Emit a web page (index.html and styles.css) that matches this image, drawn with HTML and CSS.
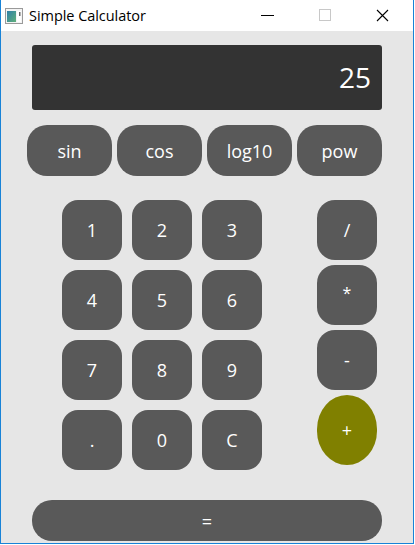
FILE: index.html
```html
<!DOCTYPE html>
<html>
<head>
<meta charset="utf-8">
<link rel="stylesheet" href="styles.css">
</head>
<body>
<div class="window">
  <div class="titlebar">
    <svg class="app-icon" width="18" height="16" viewBox="0 0 18 16">
      <defs>
        <linearGradient id="g" x1="0" y1="0" x2="1" y2="1">
          <stop offset="0" stop-color="#2f7fa8"/>
          <stop offset="1" stop-color="#5fb07a"/>
        </linearGradient>
      </defs>
      <rect x="0.5" y="0.5" width="17" height="15" fill="#f4f4f4" stroke="#9a9a9a"/>
      <rect x="2" y="3" width="9" height="11" fill="url(#g)"/>
      <rect x="12" y="3" width="4" height="11" fill="#ffffff"/>
      <rect x="14" y="4" width="1.5" height="4" fill="#6a6a6a"/>
    </svg>
    <span class="title">Simple Calculator</span>
    <div class="controls">
      <svg class="ctl" width="58" height="31" viewBox="0 0 58 31"><line x1="23" y1="15.5" x2="36" y2="15.5" stroke="#000" stroke-width="1"/></svg>
      <svg class="ctl" width="58" height="31" viewBox="0 0 58 31"><rect x="23.5" y="9.5" width="11" height="11" fill="none" stroke="#c8c8c8" stroke-width="1"/></svg>
      <svg class="ctl" width="58" height="31" viewBox="0 0 58 31"><path d="M23 10 L34 21 M34 10 L23 21" stroke="#000" stroke-width="1.1"/></svg>
    </div>
  </div>
  <div class="content">
    <div class="display">25</div>
    <div class="funcs">
      <button class="btn func">sin</button>
      <button class="btn func">cos</button>
      <button class="btn func">log10</button>
      <button class="btn func">pow</button>
    </div>
    <div class="keypad">
      <div class="numbers">
        <button class="btn key">1</button>
        <button class="btn key">2</button>
        <button class="btn key">3</button>
        <button class="btn key">4</button>
        <button class="btn key">5</button>
        <button class="btn key">6</button>
        <button class="btn key">7</button>
        <button class="btn key">8</button>
        <button class="btn key">9</button>
        <button class="btn key">.</button>
        <button class="btn key">0</button>
        <button class="btn key">C</button>
      </div>
      <div class="ops">
        <button class="btn op">/</button>
        <button class="btn op star">*</button>
        <button class="btn op">-</button>
        <button class="btn op plus">+</button>
      </div>
    </div>
    <button class="btn equals">=</button>
  </div>
</div>
</body>
</html>
```

FILE: styles.css
```css
* { box-sizing: border-box; }
html, body {
  margin: 0;
  padding: 0;
  background: #ffffff;
}
body {
  width: 415px;
  height: 545px;
  font-family: "Open Sans", "Noto Sans", sans-serif;
}
.window {
  width: 414px;
  height: 544px;
  border-left: 1px solid #1883d7;
  border-right: 1px solid #1883d7;
  border-bottom: 1px solid #1883d7;
  display: flex;
  flex-direction: column;
}
.titlebar {
  height: 31px;
  background: #ffffff;
  display: flex;
  align-items: center;
  flex: none;
}
.app-icon {
  margin-left: 4px;
  margin-top: 1px;
  flex: none;
}
.title {
  margin-left: 6px;
  font-size: 14.5px;
  color: #000;
  letter-spacing: -0.05px;
}
.controls {
  margin-left: auto;
  display: flex;
  margin-right: 1px;
}
.ctl { display: block; }
.content {
  flex: 1;
  background: #e6e6e6;
  display: flex;
  flex-direction: column;
  padding-top: 14px;
}
.display {
  margin-left: 31px;
  width: 350px;
  height: 65px;
  background: #333333;
  border-radius: 3px;
  color: #ffffff;
  font-size: 28px;
  text-align: right;
  padding-right: 11px;
  line-height: 65px;
}
.btn {
  border: none;
  background: #595959;
  color: #ffffff;
  font-family: "Open Sans", "Noto Sans", sans-serif;
  padding: 0;
  margin: 0;
  display: flex;
  align-items: center;
  justify-content: center;
}
.funcs {
  margin-top: 15px;
  margin-left: 26px;
  display: flex;
  gap: 5px;
}
.func {
  width: 85px;
  height: 51px;
  border-radius: 20px;
  font-size: 18px;
}
.keypad {
  margin-top: 24px;
  margin-left: 61px;
  display: flex;
  gap: 55px;
  align-items: flex-start;
}
.numbers {
  display: grid;
  grid-template-columns: repeat(3, 60px);
  grid-auto-rows: 60px;
  gap: 10px;
}
.key {
  border-radius: 16px;
  font-size: 18px;
}
.ops {
  display: flex;
  flex-direction: column;
  gap: 5px;
}
.op {
  width: 60px;
  height: 60px;
  border-radius: 18px;
  font-size: 18px;
}
.op.star {
  font-size: 16px;
  padding-bottom: 4px;
}
.op.plus {
  height: 70px;
  border-radius: 30px / 34px;
  background: #808000;
}
.equals {
  margin-top: 30px;
  margin-left: 31px;
  width: 350px;
  height: 41px;
  border-radius: 20px;
  font-size: 18px;
}
```
